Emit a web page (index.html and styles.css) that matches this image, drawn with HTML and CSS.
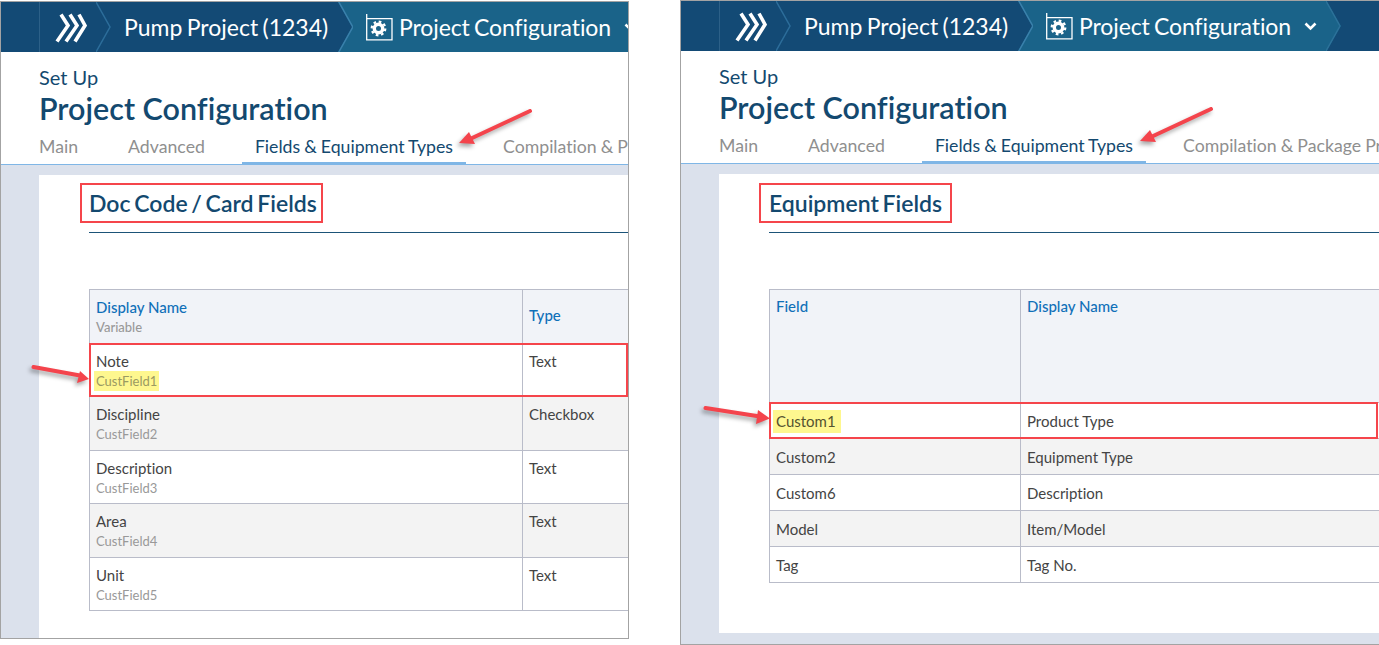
FILE: index.html
```html
<!DOCTYPE html>
<html lang="en">
<head>
<meta charset="utf-8">
<title>Project Configuration</title>
<link rel="stylesheet" href="styles.css">
</head>
<body>
<main class="stage">

  <section class="panel panel-left">
    <header class="topbar">
      <div class="home-cell"></div>
      <div class="logo-cell">
        <svg class="logo" width="32" height="30" viewBox="0 0 32 30"><path d="M6 1.5 L13 12.5 L2 28.500 M15 1.500 L22 12.500 L11 28.500 M24 1.500 L30 12.500 L20 28.500" fill="none" stroke="#fff" stroke-width="3.600"/></svg>
        <svg class="chev" width="15" height="50" viewBox="0 0 15 50"><path d="M0 0 L14 25 L0 50" fill="none" stroke="#2c6d9a" stroke-width="1.500"/></svg>
      </div>
      <div class="crumb">Pump Project (1234)</div>
      <div class="crumb-active">
        <svg class="chev-start" width="15" height="50" viewBox="0 0 15 50"><path d="M0 0 L14 25 L0 50" fill="none" stroke="#3a80ab" stroke-width="3"/></svg>
        <svg class="gear-icon" width="27" height="27" viewBox="0 0 27 27"><path d="M.7 0 V25.800 H26 V4.600 H.7" fill="none" stroke="#fff" stroke-width="1.300"/><circle cx="12.500" cy="14.500" r="4.200" fill="none" stroke="#fff" stroke-width="3.400"/><circle cx="12.500" cy="14.500" r="6.800" fill="none" stroke="#fff" stroke-width="2.200" stroke-dasharray="2.670 2.670"/></svg>
        <span class="crumb-label">Project Configuration</span>
        <svg class="caret" width="13" height="9" viewBox="0 0 13 9"><path d="M1.500 1.500 L6.500 6.500 L11.500 1.500" fill="none" stroke="#fff" stroke-width="2.600"/></svg>
        <svg class="chev-edge" width="15" height="50" viewBox="0 0 15 50"><path d="M0 0 L14 25 L0 50" fill="none" stroke="#2c7199" stroke-width="1.500"/></svg>
      </div>
    </header>
    <div class="page-head">
      <div class="eyebrow">Set Up</div>
      <h1 class="page-title">Project Configuration</h1>
    </div>
    <nav class="tabs">
      <a class="tab">Main</a>
      <a class="tab">Advanced</a>
      <a class="tab tab-active">Fields &amp; Equipment Types</a>
      <a class="tab">Compilation &amp; Package Properties</a>
    </nav>
    <div class="workspace">
      <div class="card">
        <h2 class="section-title"><span class="red-box">Doc Code / Card Fields</span></h2>
        <table class="grid grid-doc">
          <thead>
            <tr><th><span class="th-main">Display Name</span><span class="sub">Variable</span></th><th class="th-type">Type</th></tr>
          </thead>
          <tbody>
            <tr><td>Note<span class="sub"><span class="hl">CustField1</span></span></td><td>Text</td></tr>
            <tr><td>Discipline<span class="sub">CustField2</span></td><td>Checkbox</td></tr>
            <tr><td>Description<span class="sub">CustField3</span></td><td>Text</td></tr>
            <tr><td>Area<span class="sub">CustField4</span></td><td>Text</td></tr>
            <tr><td>Unit<span class="sub">CustField5</span></td><td>Text</td></tr>
          </tbody>
        </table>
      </div>
    </div>
    <div class="row-box row-box-left"></div>
    <svg class="arrow arrow-tab" width="90" height="50" viewBox="0 0 90 50"><polygon points="6,39 16,28 22,40"/><path class="shaft" d="M77 7 L17 35"/></svg>
    <svg class="arrow arrow-row-left" width="70" height="32" viewBox="0 0 70 32"><polygon points="61,19 52,11 49,23"/><path class="shaft" d="M5.500 7 L52 15.500"/></svg>
  </section>

  <section class="panel panel-right">
    <header class="topbar">
      <div class="home-cell"></div>
      <div class="logo-cell">
        <svg class="logo" width="32" height="30" viewBox="0 0 32 30"><path d="M6 1.5 L13 12.5 L2 28.500 M15 1.500 L22 12.500 L11 28.500 M24 1.500 L30 12.500 L20 28.500" fill="none" stroke="#fff" stroke-width="3.600"/></svg>
        <svg class="chev" width="15" height="50" viewBox="0 0 15 50"><path d="M0 0 L14 25 L0 50" fill="none" stroke="#2c6d9a" stroke-width="1.500"/></svg>
      </div>
      <div class="crumb">Pump Project (1234)</div>
      <div class="crumb-active">
        <svg class="chev-start" width="15" height="50" viewBox="0 0 15 50"><path d="M0 0 L14 25 L0 50" fill="none" stroke="#3a80ab" stroke-width="3"/></svg>
        <svg class="gear-icon" width="27" height="27" viewBox="0 0 27 27"><path d="M.7 0 V25.800 H26 V4.600 H.7" fill="none" stroke="#fff" stroke-width="1.300"/><circle cx="12.500" cy="14.500" r="4.200" fill="none" stroke="#fff" stroke-width="3.400"/><circle cx="12.500" cy="14.500" r="6.800" fill="none" stroke="#fff" stroke-width="2.200" stroke-dasharray="2.670 2.670"/></svg>
        <span class="crumb-label">Project Configuration</span>
        <svg class="caret" width="13" height="9" viewBox="0 0 13 9"><path d="M1.500 1.500 L6.500 6.500 L11.500 1.500" fill="none" stroke="#fff" stroke-width="2.600"/></svg>
        <svg class="chev-edge" width="15" height="50" viewBox="0 0 15 50"><path d="M0 0 L14 25 L0 50" fill="none" stroke="#2c7199" stroke-width="1.500"/></svg>
      </div>
    </header>
    <div class="page-head">
      <div class="eyebrow">Set Up</div>
      <h1 class="page-title">Project Configuration</h1>
    </div>
    <nav class="tabs">
      <a class="tab">Main</a>
      <a class="tab">Advanced</a>
      <a class="tab tab-active">Fields &amp; Equipment Types</a>
      <a class="tab">Compilation &amp; Package Properties</a>
    </nav>
    <div class="workspace">
      <div class="card">
        <h2 class="section-title"><span class="red-box">Equipment Fields</span></h2>
        <table class="grid grid-eq">
          <thead>
            <tr><th>Field</th><th>Display Name</th></tr>
          </thead>
          <tbody>
            <tr><td><span class="hl hl-main">Custom1</span></td><td>Product Type</td></tr>
            <tr><td>Custom2</td><td>Equipment Type</td></tr>
            <tr><td>Custom6</td><td>Description</td></tr>
            <tr><td>Model</td><td>Item/Model</td></tr>
            <tr><td>Tag</td><td>Tag No.</td></tr>
          </tbody>
        </table>
      </div>
    </div>
    <div class="row-box row-box-right"></div>
    <svg class="arrow arrow-tab" width="90" height="50" viewBox="0 0 90 50"><polygon points="6,39 16,28 22,40"/><path class="shaft" d="M77 7 L17 35"/></svg>
    <svg class="arrow arrow-row-right" width="78" height="32" viewBox="0 0 78 32"><polygon points="70,16.500 58,8 56,22"/><path class="shaft" d="M5.500 6 L60 14.500"/></svg>
  </section>

</main>
</body>
</html>
```

FILE: styles.css
```css
* { box-sizing: border-box; }
html, body { margin: 0; padding: 0; background: #fff; }
body { font-family: Lato, "Open Sans", sans-serif; font-variant-ligatures: none; overflow: hidden; }

.stage {
  display: flex;
  justify-content: space-between;
  align-items: flex-start;
  width: 1379px;
  height: 645px;
}

.panel {
  position: relative;
  display: flex;
  flex-direction: column;
  overflow: hidden;
  border: 1px solid #a3a3a3;
}
.panel-left { width: 629px; height: 638px; margin-top: 1px; }
.panel-right { width: 699px; height: 645px; border-right: 0; }

.topbar {
  display: flex;
  flex: none;
  height: 50px;
  background: #134a75;
  color: #fff;
  font-size: 23px;
  line-height: 50px;
  white-space: nowrap;
  word-spacing: -1.500px;
}
.home-cell { flex: none; width: 39px; border-right: 1px solid #2c6088; }
.logo-cell { position: relative; flex: none; width: 84px; }
.logo { position: absolute; left: 15px; top: 11px; }
.chev { position: absolute; left: 56px; top: 0; }
.crumb { flex: none; width: 214px; }
.crumb-active {
  position: relative;
  flex: none;
  display: flex;
  align-items: center;
  width: 323px;
  padding-left: 28px;
  background: #1a6389;
  clip-path: polygon(0 0, calc(100% - 14px) 0, 100% 50%, calc(100% - 14px) 100%, 0 100%, 14px 50%);
}
.crumb-label { letter-spacing: -.1px; }
.gear-icon { flex: none; margin-right: 6px; }
.caret { flex: none; margin-left: 13px; }
.chev-start { position: absolute; left: 0; top: 0; }
.chev-edge { position: absolute; right: 0; top: 0; }

.page-head { flex: none; padding: 13px 38px 0; color: #13496f; }
.eyebrow { font-size: 20px; line-height: 24px; }
.page-title { margin: 0; font-size: 30.500px; font-weight: 600; line-height: 38px; }

.tabs {
  flex: none;
  display: flex;
  gap: 25px;
  height: 38px;
  padding-left: 25.500px;
  border-bottom: 1px solid #7fb6e6;
  white-space: nowrap;
}
.tab { padding: 8px 12.500px 0; font-size: 17.700px; line-height: 24px; color: #8f8f8f; word-spacing: -.5px; }
.tab-active { border-bottom: 3px solid #7fb6e6; color: #13496f; margin-bottom: -1px; }

.workspace { flex: 1; padding: 10px 0 0 38px; background: #dbe1ec; min-height: 0; }
.panel-right .workspace { padding-bottom: 11px; }
.card { height: 100%; padding: 8px 0 0 50px; background: #fff; }
.panel-right .card { padding-top: 9px; }

.section-title {
  margin: 0;
  height: 50px;
  border-bottom: 1px solid #1b5378;
  font-size: 23px;
  font-weight: 600;
  line-height: 36px;
  word-spacing: -2px;
  color: #13496f;
}
.red-box { display: inline-block; margin-left: -9px; padding: 0 4px 0 7px; border: 2px solid #f5454b; }
.panel-right .red-box { margin-left: -10px; padding: 0 8px; }

.grid {
  margin-top: 56px;
  border-collapse: collapse;
  table-layout: fixed;
  font-size: 15px;
  line-height: 20px;
  color: #444;
}
.grid th, .grid td {
  padding: 7px 6px;
  border: 1px solid #b9bcc9;
  vertical-align: top;
  text-align: left;
}
.grid th { background: #f1f3f8; font-weight: 500; color: #1070b8; }
.grid tbody tr:nth-child(even) td { background: #f3f3f3; }
.grid-doc { width: 800px; }
.grid-doc th:first-child { width: 433px; }
.grid-doc th { height: 54px; padding-top: 6px; padding-bottom: 6px; vertical-align: middle; }
.grid-doc .th-type { padding-bottom: 10px; }
.grid-doc td { height: 53.400px; padding-top: 7px; padding-bottom: 5px; }
.th-main { display: block; }
.sub { display: block; margin-top: 1px; font-size: 13px; line-height: 19px; color: #999; }
.grid-eq { width: 800px; }
.grid-eq th:first-child { width: 251px; }
.grid-eq th { height: 113px; padding-top: 6px; }
.grid-eq td { height: 36px; padding-top: 8px; }
.hl { background: #fef78f; color: #9a9a62; margin: 0 -2px; padding: 2px 2px; }
.hl-main { display: inline-block; height: 23px; line-height: 23px; margin: -3px 0 -3px -3px; padding: 0 5px 0 3px; color: #55532f; }

.row-box { position: absolute; border: 2px solid #f5454b; }
.row-box-left { left: 88px; top: 341px; width: 539px; height: 54px; }
.row-box-right { left: 88px; top: 401px; width: 609px; height: 37px; }

.arrow { position: absolute; fill: #f4444c; filter: drop-shadow(-2px 3px 2px rgba(0, 0, 0, .35)); }
.shaft { fill: none; stroke: #f4444c; stroke-width: 4px; stroke-linecap: round; }
.arrow-tab { left: 452px; top: 102px; }
.panel-right .arrow-tab { left: 453px; top: 101px; }
.arrow-row-left { left: 27px; top: 358px; }
.arrow-row-right { left: 19px; top: 401px; }
```
